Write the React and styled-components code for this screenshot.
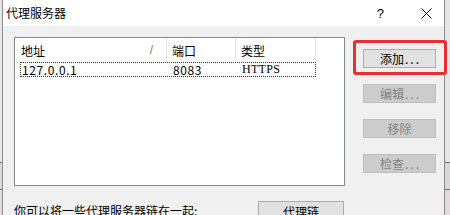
import React from "react";
import styled, { createGlobalStyle } from "styled-components";

const Global = createGlobalStyle`
  html, body { margin: 0; padding: 0; overflow: hidden; }
  body { font-family: "Noto Sans CJK SC", "Liberation Sans", sans-serif; }
`;

const Desktop = styled.div`
  width: 450px;
  height: 215px;
  overflow: hidden;
  display: flex;
  padding-left: 2px;
  box-sizing: border-box;
  background: linear-gradient(to bottom, #e6e6e6 0, #e6e6e6 162px, #6e6e6e 162px, #6e6e6e 163px, #d8d8d8 163px, #d8d8d8 189px, #6e6e6e 189px, #6e6e6e 190px, #e4dada 190px);
`;

const Window = styled.div`
  position: relative;
  width: 443px;
  height: 215px;
  flex: none;
  box-sizing: border-box;
  border-left: 1px solid #8c8c8c;
  border-right: 1px solid #8c8c8c;
  background: #f0f0f0;
  display: flex;
  flex-direction: column;
`;

const TitleBar = styled.div`
  height: 26px;
  flex: none;
  background: #ffffff;
  display: flex;
  align-items: center;
  padding-left: 3px;
  font-size: 12px;
  color: #000;
`;

const TitleText = styled.span`
  line-height: 16px;
`;

const TitleControls = styled.div`
  margin-left: auto;
  display: flex;
  align-items: center;
  gap: 37px;
  padding-right: 12px;
`;

const Help = styled.span`
  font-family: "Liberation Sans", sans-serif;
  font-size: 13px;
  color: #000;
`;

const Body = styled.div`
  display: flex;
  flex-direction: column;
`;

const TopRow = styled.div`
  display: flex;
  padding: 11px 0 0 11px;
`;

const List = styled.div`
  width: 331px;
  height: 149px;
  box-sizing: border-box;
  border: 1px solid #828790;
  background: #fff;
  display: flex;
  flex-direction: column;
`;

const Header = styled.div`
  display: flex;
  height: 24px;
  flex: none;
`;

const HeaderCell = styled.div`
  width: ${(p) => p.$w}px;
  box-sizing: border-box;
  padding-left: ${(p) => p.$pl}px;
  border-right: 1px solid #e5e5e5;
  display: flex;
  align-items: center;
  font-size: 12px;
  color: #000;
`;

const SortMark = styled.span`
  margin-left: auto;
  margin-right: 13px;
  color: #7a7a7a;
  font-family: "Liberation Sans", sans-serif;
  font-size: 12px;
`;

const Row = styled.div`
  display: flex;
  margin-left: 5px;
  width: 296px;
  height: 15px;
  box-sizing: border-box;
  border: 1px dotted #333;
  align-items: center;
`;

const Cell = styled.div`
  width: ${(p) => p.$w}px;
  box-sizing: border-box;
  padding-left: ${(p) => p.$pl}px;
  font-family: ${(p) => (p.$serif ? '"Liberation Serif", serif' : '"Noto Sans CJK SC", sans-serif')};
  font-size: 12px;
  letter-spacing: ${(p) => (p.$serif ? "0.3px" : "0.6px")};
  line-height: 13px;
  color: #000;
  white-space: nowrap;
`;

const ButtonColumn = styled.div`
  display: flex;
  flex-direction: column;
  gap: 16px;
  margin-left: 18px;
  padding-top: 12px;
  position: relative;
`;

const Button = styled.div`
  width: ${(p) => p.$w || 73}px;
  height: ${(p) => p.$h || 19}px;
  box-sizing: border-box;
  border: 1px solid ${(p) => (p.$disabled ? "#bfbfbf" : "#adadad")};
  background: ${(p) => (p.$disabled ? "#cccccc" : "#e1e1e1")};
  color: ${(p) => (p.$disabled ? "#838383" : "#000")};
  font-size: 12px;
  display: flex;
  align-items: center;
  justify-content: center;
  line-height: 14px;
  white-space: nowrap;
`;

const Dots = styled.span`
  letter-spacing: 2px;
  margin-left: 1px;
  margin-right: -2px;
`;

const Highlight = styled.div`
  position: absolute;
  left: -10px;
  top: 3px;
  width: 94px;
  height: 35px;
  box-sizing: border-box;
  border: 3px solid #e8302e;
  border-radius: 3px;
  pointer-events: none;
`;

const BottomRow = styled.div`
  display: flex;
  align-items: flex-start;
  padding: 15px 0 0 11px;
`;

const Note = styled.div`
  width: 244px;
  font-size: 12px;
  line-height: 16px;
  padding-top: 2px;
  color: #000;
`;

export default function App() {
  return (
    <>
      <Global />
      <Desktop>
        <Window>
          <TitleBar>
            <TitleText>代理服务器</TitleText>
            <TitleControls>
              <Help>?</Help>
              <svg width="11" height="11" viewBox="0 0 11 11">
                <path d="M0.5 0.5 L10.5 10.5 M10.5 0.5 L0.5 10.5" stroke="#000" strokeWidth="1" />
              </svg>
            </TitleControls>
          </TitleBar>
          <Body>
            <TopRow>
              <List>
                <Header>
                  <HeaderCell $w={152} $pl={6}>
                    地址<SortMark>/</SortMark>
                  </HeaderCell>
                  <HeaderCell $w={69} $pl={5}>端口</HeaderCell>
                  <HeaderCell $w={80} $pl={5}>类型</HeaderCell>
                </Header>
                <Row>
                  <Cell $w={151} $pl={1}>127.0.0.1</Cell>
                  <Cell $w={69} $pl={1}>8083</Cell>
                  <Cell $w={74} $pl={1} $serif>HTTPS</Cell>
                </Row>
              </List>
              <ButtonColumn>
                <Highlight />
                <Button>添加<Dots>...</Dots></Button>
                <Button $disabled>编辑<Dots>...</Dots></Button>
                <Button $disabled>移除</Button>
                <Button $disabled>检查<Dots>...</Dots></Button>
              </ButtonColumn>
            </TopRow>
            <BottomRow>
              <Note>你可以将一些代理服务器链在一起:</Note>
              <Button $w={86} $h={21}>代理链</Button>
            </BottomRow>
          </Body>
        </Window>
      </Desktop>
    </>
  );
}
